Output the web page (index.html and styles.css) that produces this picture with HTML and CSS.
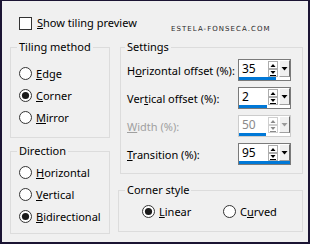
FILE: index.html
```html
<!DOCTYPE html>
<html>
<head>
<meta charset="utf-8">
<link rel="stylesheet" href="styles.css">
</head>
<body>
<div class="frame">
  <div class="toprow">
    <span class="check"></span>
    <span class="lbl"><u>S</u>how tiling preview</span>
  </div>
  <div class="watermark">ESTELA-FONSECA.COM</div>
  <div class="main">
    <div class="col left">
      <fieldset class="box tiling">
        <legend>Tiling method</legend>
        <div class="radio"><svg width="13" height="13" viewBox="0 0 13 13"><circle cx="6.5" cy="6.5" r="6" fill="#fff" stroke="#333"/></svg><span><u>E</u>dge</span></div>
        <div class="radio"><svg width="13" height="13" viewBox="0 0 13 13"><circle cx="6.5" cy="6.5" r="6" fill="#fff" stroke="#333"/><circle cx="6.5" cy="6.5" r="3.6" fill="#1a1a1a"/></svg><span><u>C</u>orner</span></div>
        <div class="radio"><svg width="13" height="13" viewBox="0 0 13 13"><circle cx="6.5" cy="6.5" r="6" fill="#fff" stroke="#333"/></svg><span><u>M</u>irror</span></div>
      </fieldset>
      <fieldset class="box direction">
        <legend>Direction</legend>
        <div class="radio"><svg width="13" height="13" viewBox="0 0 13 13"><circle cx="6.5" cy="6.5" r="6" fill="#fff" stroke="#333"/></svg><span><u>H</u>orizontal</span></div>
        <div class="radio"><svg width="13" height="13" viewBox="0 0 13 13"><circle cx="6.5" cy="6.5" r="6" fill="#fff" stroke="#333"/></svg><span><u>V</u>ertical</span></div>
        <div class="radio"><svg width="13" height="13" viewBox="0 0 13 13"><circle cx="6.5" cy="6.5" r="6" fill="#fff" stroke="#333"/><circle cx="6.5" cy="6.5" r="3.6" fill="#1a1a1a"/></svg><span><u>B</u>idirectional</span></div>
      </fieldset>
    </div>
    <div class="col right">
      <fieldset class="box settings">
        <legend>Settings</legend>
        <div class="row">
          <span class="rl">H<u>o</u>rizontal offset (%):</span>
          <div class="spin">
            <div class="spin-top">
              <span class="val">35</span>
              <svg class="arrows" width="10" height="16" viewBox="0 0 10 16"><rect x="0.5" y="0.5" width="9" height="7" fill="#fff" stroke="#adadad"/><rect x="0.5" y="8.5" width="9" height="7" fill="#fff" stroke="#adadad"/><path d="M2.5 6 L5 3 L7.5 6 Z" fill="#000"/><path d="M2.5 10 L7.5 10 L5 13 Z" fill="#000"/><path d="M2 14.5 H8" stroke="#000"/></svg>
              <span class="drop"><svg width="7" height="4" viewBox="0 0 7 4"><path d="M0.5 0 H6.5 L3.5 3.5 Z" fill="#000"/></svg></span>
            </div>
            <div class="bar" style="width:37px"></div>
          </div>
        </div>
        <div class="row">
          <span class="rl">Ver<u>t</u>ical offset (%):</span>
          <div class="spin">
            <div class="spin-top">
              <span class="val">2</span>
              <svg class="arrows" width="10" height="16" viewBox="0 0 10 16"><rect x="0.5" y="0.5" width="9" height="7" fill="#fff" stroke="#adadad"/><rect x="0.5" y="8.5" width="9" height="7" fill="#fff" stroke="#adadad"/><path d="M2.5 6 L5 3 L7.5 6 Z" fill="#000"/><path d="M2.5 10 L7.5 10 L5 13 Z" fill="#000"/><path d="M2 14.5 H8" stroke="#000"/></svg>
              <span class="drop"><svg width="7" height="4" viewBox="0 0 7 4"><path d="M0.5 0 H6.5 L3.5 3.5 Z" fill="#000"/></svg></span>
            </div>
            <div class="bar" style="width:28px"></div>
          </div>
        </div>
        <div class="row">
          <span class="rl disabled"><u>W</u>idth (%):</span>
          <div class="spin off">
            <div class="spin-top">
              <span class="val">50</span>
              <svg class="arrows" width="10" height="16" viewBox="0 0 10 16"><rect x="0.5" y="0.5" width="9" height="7" fill="#fff" stroke="#cfcfcf"/><rect x="0.5" y="8.5" width="9" height="7" fill="#fff" stroke="#cfcfcf"/><path d="M2.5 6 L5 3 L7.5 6 Z" fill="#8a8a8a"/><path d="M2.5 10 L7.5 10 L5 13 Z" fill="#8a8a8a"/><path d="M2 14.5 H8" stroke="#8a8a8a"/></svg>
              <span class="drop"><svg width="7" height="4" viewBox="0 0 7 4"><path d="M0.5 0 H6.5 L3.5 3.5 Z" fill="#9a9a9a"/></svg></span>
            </div>
            <div class="bar" style="width:27px"></div>
          </div>
        </div>
        <div class="row">
          <span class="rl"><u>T</u>ransition (%):</span>
          <div class="spin">
            <div class="spin-top">
              <span class="val">95</span>
              <svg class="arrows" width="10" height="16" viewBox="0 0 10 16"><rect x="0.5" y="0.5" width="9" height="7" fill="#fff" stroke="#adadad"/><rect x="0.5" y="8.5" width="9" height="7" fill="#fff" stroke="#adadad"/><path d="M2.5 6 L5 3 L7.5 6 Z" fill="#000"/><path d="M2.5 10 L7.5 10 L5 13 Z" fill="#000"/><path d="M2 14.5 H8" stroke="#000"/></svg>
              <span class="drop"><svg width="7" height="4" viewBox="0 0 7 4"><path d="M0.5 0 H6.5 L3.5 3.5 Z" fill="#000"/></svg></span>
            </div>
            <div class="bar" style="width:51px"></div>
          </div>
        </div>
      </fieldset>
      <fieldset class="box corner">
        <legend>Corner style</legend>
        <div class="hradios">
          <div class="radio first"><svg width="13" height="13" viewBox="0 0 13 13"><circle cx="6.5" cy="6.5" r="6" fill="#fff" stroke="#333"/><circle cx="6.5" cy="6.5" r="3.6" fill="#1a1a1a"/></svg><span><u>L</u>inear</span></div>
          <div class="radio"><svg width="13" height="13" viewBox="0 0 13 13"><circle cx="6.5" cy="6.5" r="6" fill="#fff" stroke="#333"/></svg><span>C<u>u</u>rved</span></div>
        </div>
      </fieldset>
    </div>
  </div>
</div>
</body>
</html>
```
FILE: styles.css
```css
* { box-sizing: border-box; }
html, body { margin: 0; padding: 0; }
body {
  font-family: "Noto Sans", "Open Sans", sans-serif;
  font-size: 11px;
  color: #000;
  background: #1b1433;
}
.frame {
  position: relative;
  width: 310px;
  height: 244px;
  background: #f0f0f0;
  border-top: 1px solid #1b1433;
  border-left: 2px solid #1b1433;
  border-right: 2px solid #1b1433;
  border-bottom: 2px solid #1b1433;
  padding: 14px 0 0 8px;
}
u { text-decoration: underline; text-underline-offset: 1px; }
.toprow {
  display: flex;
  align-items: center;
  height: 16px;
  padding-left: 9px;
}
.check {
  width: 13px;
  height: 13px;
  border: 1px solid #333;
  background: #fff;
  margin-right: 5px;
}
.lbl { line-height: 16px; }
.watermark {
  position: absolute;
  left: 169px;
  top: 24px;
  font-family: "DejaVu Sans", sans-serif;
  font-size: 7px;
  letter-spacing: 1.05px;
  color: #2a2a2a;
  line-height: 9px;
}
.main {
  display: flex;
  gap: 10px;
  margin-top: 9px;
}
.col { display: flex; flex-direction: column; }
.left { width: 100px; }
.right { width: 183px; }
.box {
  margin: 0;
  border: 1px solid #dcdcdc;
  padding: 0 0 0 8px;
  min-width: 0;
}
.box legend {
  padding: 0 2px;
  margin-left: -2px;
  line-height: 14px;
}
.radio {
  display: flex;
  align-items: center;
  height: 22px;
}
.radio svg { margin-right: 4px; flex: none; }
.tiling { padding-top: 8px; padding-bottom: 9px; }
.direction { margin-top: 6px; padding-top: 3px; padding-bottom: 6px; }
.settings { padding: 5px 11px 8px 6px; }
.row {
  display: flex;
  align-items: center;
  justify-content: space-between;
  height: 22px;
  margin-bottom: 6px;
}
.row:last-child { margin-bottom: 0; }
.rl { white-space: nowrap; }
.disabled { color: #a0a0a0; }
.spin {
  width: 53px;
  height: 22px;
  border: 1px solid #7a7a7a;
  background: #fff;
  display: flex;
  flex-direction: column;
  flex: none;
}
.spin.off { border-color: #cccccc; }
.spin.off .val { color: #8a8a8a; }
.spin-top {
  display: flex;
  height: 17px;
}
.val {
  flex: 1;
  padding-left: 3px;
  line-height: 17px;
  font-size: 12px;
}
.arrows { margin-top: 1px; margin-right: 1px; }
.drop {
  width: 11px;
  height: 17px;
  background: #f0f0f0;
  border-top: 1px solid #fff;
  border-left: 1px solid #fff;
  border-right: 1px solid #696969;
  border-bottom: 1px solid #a0a0a0;
  display: flex;
  justify-content: center;
  padding-top: 6px;
}
.drop svg { display: block; }
.bar {
  height: 3px;
  background: #0078d7;
}
.corner {
  margin-top: 9px;
  margin-left: -2px;
  padding: 3px 0 9px 8px;
}
.hradios { display: flex; padding-left: 15px; }
.hradios .first { width: 81px; }
```
